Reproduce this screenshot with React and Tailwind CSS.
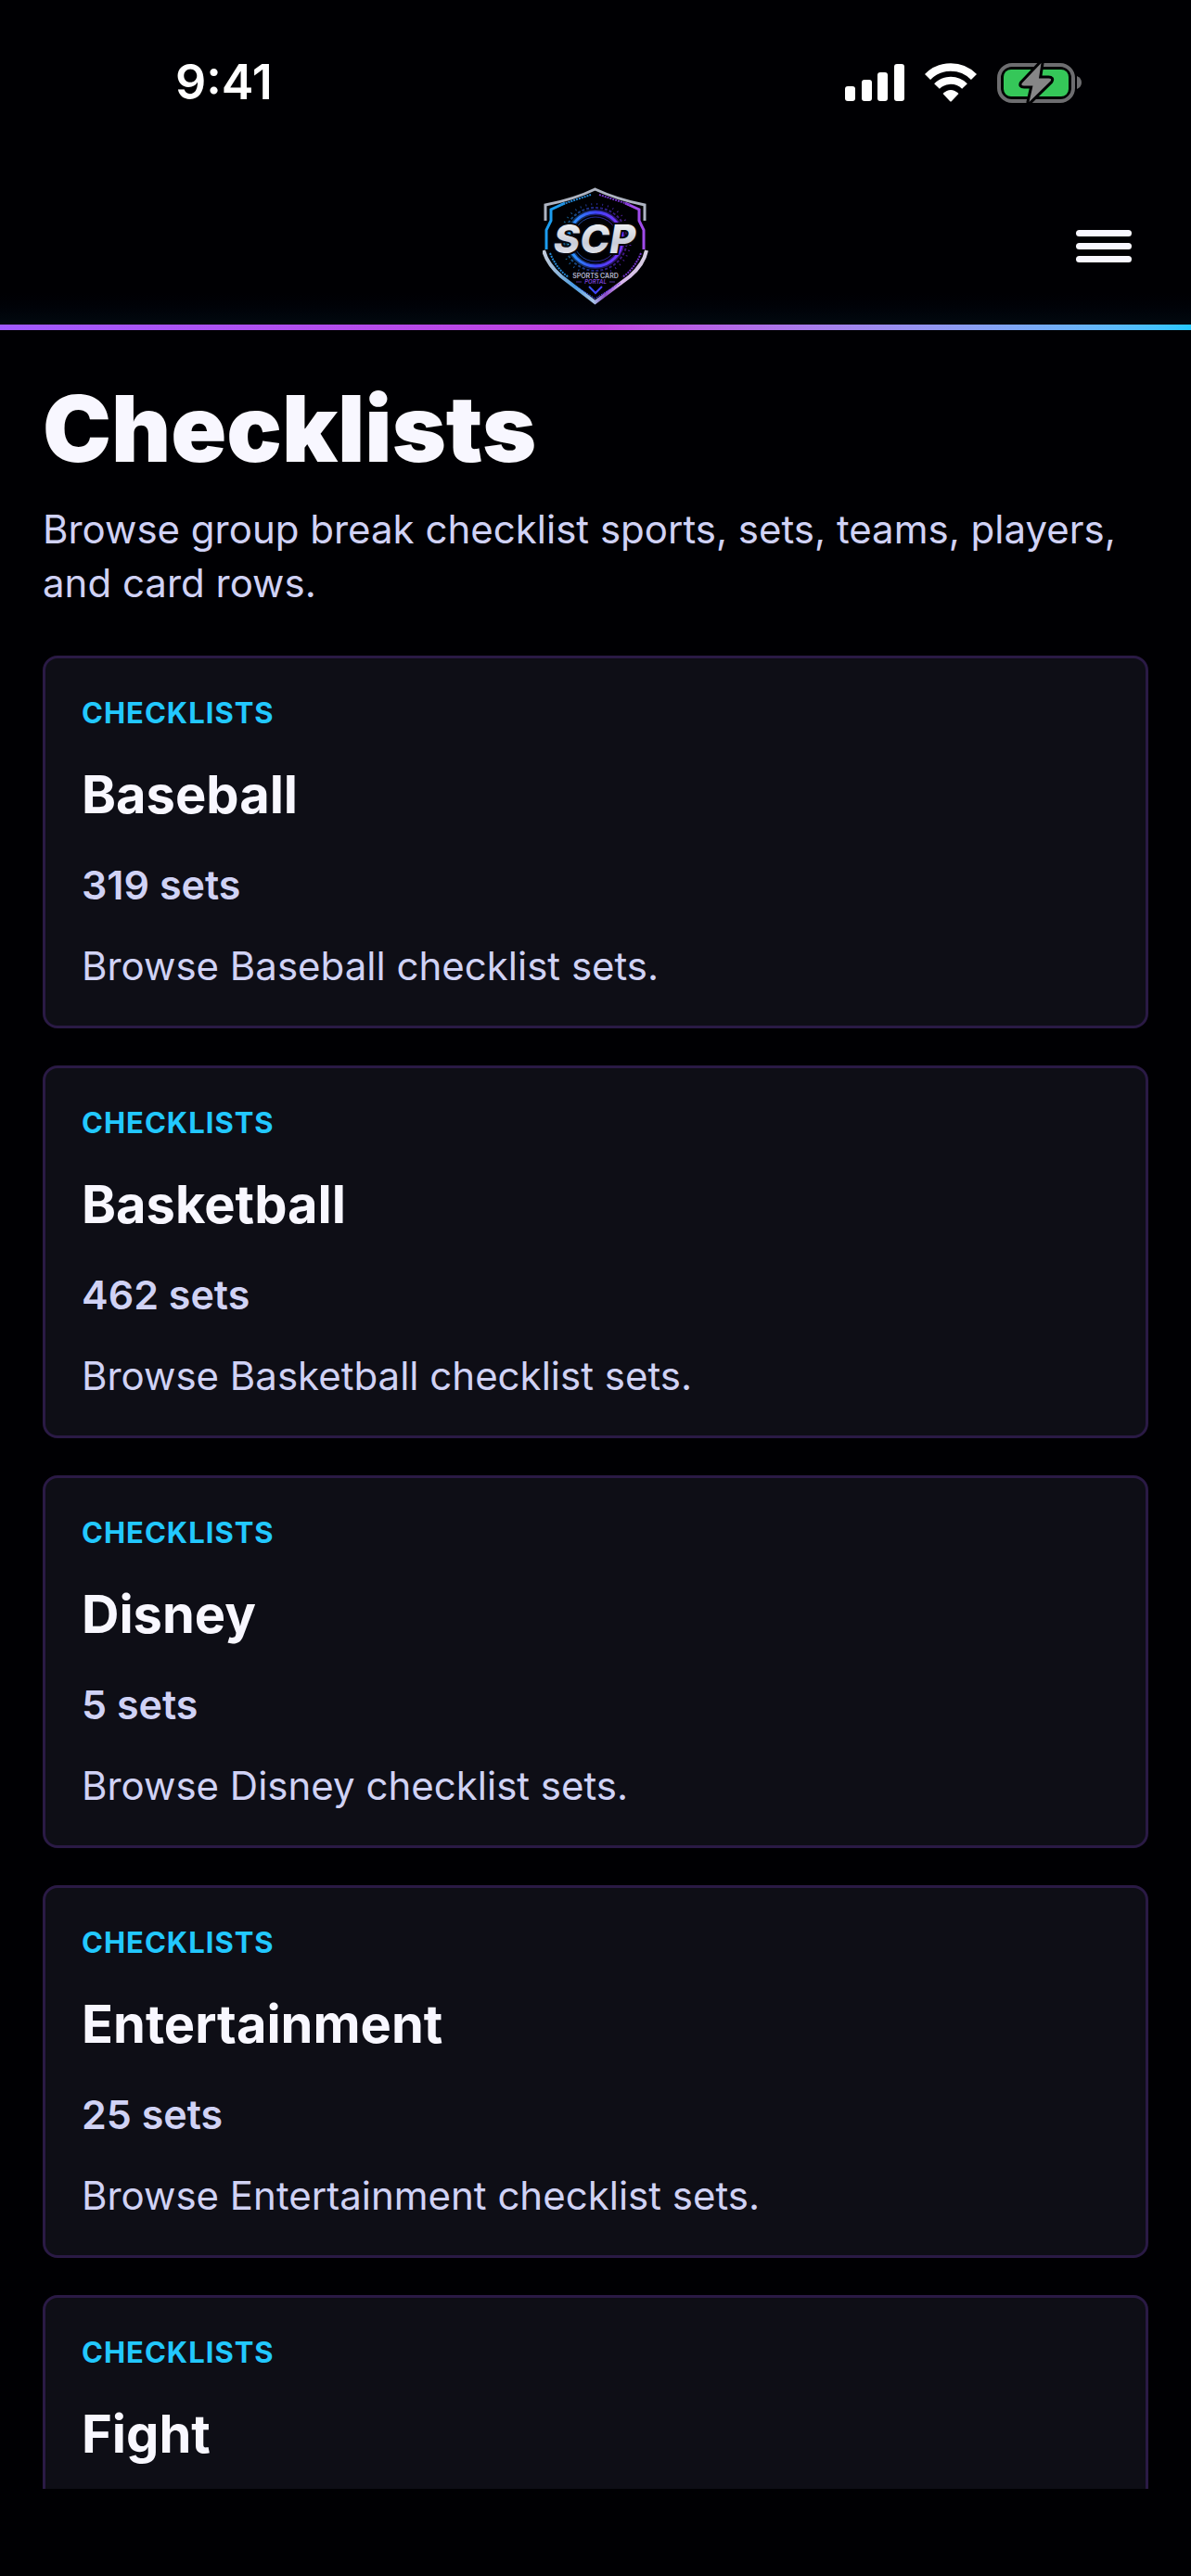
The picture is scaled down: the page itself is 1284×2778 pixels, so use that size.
const sports = [
  { name: "Baseball", sets: 319 },
  { name: "Basketball", sets: 462 },
  { name: "Disney", sets: 5 },
  { name: "Entertainment", sets: 25 },
  { name: "Fight" },
];

function StatusBar() {
  return (
    <div className="flex h-[176px] items-center justify-between pt-[2px] pr-[118px] pl-[189px]">
      <span className="text-[52px] leading-[60px] font-semibold text-white">9:41</span>
      <div className="flex items-center gap-[22px]">
        <svg className="h-[42px] w-[64px]" viewBox="0 0 64 42" fill="#fff" aria-hidden="true">
          <rect x="0" y="25" width="11" height="16" rx="3" />
          <rect x="18" y="18" width="11" height="23" rx="3" />
          <rect x="35" y="10" width="11" height="31" rx="3" />
          <rect x="53" y="1" width="11" height="40" rx="3" />
        </svg>
        <svg className="h-[42px] w-[56px]" viewBox="0 0 56 42" fill="none" aria-hidden="true">
          <path d="M3 15A35 35 0 0 1 53 15" stroke="#fff" strokeWidth="8.500" />
          <path d="M13 25A21 21 0 0 1 43 25" stroke="#fff" strokeWidth="8" />
          <path d="M19.500 33Q28 25 36.500 33L29 41Q28 42 27 41Z" fill="#fff" />
        </svg>
        <svg className="h-[46px] w-[91px]" viewBox="0 0 91 46" fill="none" aria-hidden="true">
          <rect x="2" y="4" width="80" height="39" rx="14" stroke="#6d6d70" strokeWidth="4" />
          <rect x="7" y="9" width="70" height="29" rx="8" fill="#35c759" />
          <path d="M86 16q5 2 5 7t-5 7Z" fill="#6d6d70" />
          <path
            d="M47.500 2L27 23.500q-2 3 2 3h9.500L34.500 44L57.500 21.500q2-3-2-3h-10.500Z"
            fill="#868687"
            stroke="#000003"
            strokeWidth="6"
            strokeLinejoin="round"
            paintOrder="stroke"
          />
        </svg>
      </div>
    </div>
  );
}

function Logo() {
  return (
    <svg className="h-[128px] w-[114px]" viewBox="0 0 114 128" fill="none" role="img" aria-label="SCP Sports Card Portal">
      <defs>
        <linearGradient id="neon" gradientUnits="userSpaceOnUse" x1="22" y1="0" x2="92" y2="0">
          <stop offset="0" stopColor="#22b4ff" />
          <stop offset="0.5" stopColor="#3f45ff" />
          <stop offset="1" stopColor="#8a2cf5" />
        </linearGradient>
        <linearGradient id="steel" x1="0" y1="0" x2="0" y2="1">
          <stop offset="0" stopColor="#ffffff" />
          <stop offset="0.6" stopColor="#c9ccd8" />
          <stop offset="1" stopColor="#f4f5fa" />
        </linearGradient>
        <linearGradient id="rim" x1="0" y1="0" x2="1" y2="0">
          <stop offset="0" stopColor="#c4cbd8" />
          <stop offset="0.3" stopColor="#4f9ee0" />
          <stop offset="0.48" stopColor="#a9c6e8" />
          <stop offset="0.6" stopColor="#8a48c8" />
          <stop offset="0.75" stopColor="#d8b4ee" />
          <stop offset="1" stopColor="#d6cfe0" />
        </linearGradient>
      </defs>
      <path d="M3 37V20Q34 14 56.500 3Q80 14 110 20V37" stroke="#aeb4c2" strokeWidth="3" />
      <path d="M1 69Q5 84 20 97L56.500 125L94 97Q109 84 112 69" stroke="url(#rim)" strokeWidth="4" />
      <path d="M24 18L9 25V37L4 47V68" stroke="#1c9df0" strokeWidth="3" />
      <path d="M89 18L104 25V37L109 47V68" stroke="#a04bea" strokeWidth="3" />
      <path d="M19 20L52 9M8 72Q15 89 28 98" stroke="#2389d8" strokeWidth="2" strokeDasharray="2 1" />
      <path d="M61 9L95 20M106 72Q99 89 86 98" stroke="#7333c8" strokeWidth="2" strokeDasharray="2 1" />
      <path d="M30 104L56.500 121L84 104" stroke="url(#neon)" strokeWidth="1" strokeDasharray="2 1" />
      <circle cx="57" cy="57" r="38" stroke="url(#neon)" strokeWidth="2" strokeDasharray="1 5" opacity="0.6" />
      <circle cx="57" cy="57" r="34" stroke="url(#neon)" strokeWidth="2" strokeDasharray="3 2" opacity="0.5" />
      <circle cx="57" cy="57" r="29" stroke="url(#neon)" strokeWidth="6" opacity="0.4" />
      <circle cx="57" cy="57" r="29" stroke="url(#neon)" strokeWidth="3" />
      <circle cx="57" cy="57" r="24" stroke="url(#neon)" strokeWidth="1" opacity="0.6" />
      <text x="56" y="72" textAnchor="middle" fill="url(#steel)" stroke="#05050c" strokeWidth="4" paintOrder="stroke" className="font-['Inter',sans-serif] text-[43px] font-extrabold italic">
        SCP
      </text>
      <text x="57" y="99" textAnchor="middle" fill="#b4b6cc" className="font-['Inter',sans-serif] text-[7px] font-semibold">
        SPORTS CARD
      </text>
      <text x="57" y="105" textAnchor="middle" fill="#7a42d8" className="font-['Inter',sans-serif] text-[6px] font-semibold italic">
        PORTAL
      </text>
      <path d="M36 103H42M72 103H78" stroke="#4a2c98" strokeWidth="1" />
      <path d="M50 108L57 115L64 108" stroke="url(#neon)" strokeWidth="2" />
    </svg>
  );
}

function Header() {
  return (
    <header>
      <div className="grid h-[174px] grid-cols-3 items-center bg-gradient-to-b from-[#000003] from-80% to-[#020a10] px-[64px] pt-[4px]">
        <a href="#home" className="col-start-2 justify-self-center">
          <Logo />
        </a>
        <button type="button" aria-label="Open menu" className="flex w-[60px] flex-col gap-[7px] justify-self-end">
          <span className="h-[7px] rounded-full bg-[#f8f7ff]" />
          <span className="h-[7px] rounded-full bg-[#f8f7ff]" />
          <span className="h-[7px] rounded-full bg-[#f8f7ff]" />
        </button>
      </div>
      <div className="h-[6px] bg-gradient-to-r from-[#a05aff] via-[#c040e0] to-[#22c8ff]" />
    </header>
  );
}

function SportCard({ name, sets }) {
  return (
    <a
      href={`#${name.toLowerCase()}`}
      className="flex min-h-[402px] flex-col rounded-[16px] border-[3px] border-[#2a1a45] bg-[#0e0e16] px-[39px] pt-[39px]"
    >
      <span className="text-[31px] leading-[40px] font-bold tracking-[1px] text-[#22c8ff] uppercase">Checklists</span>
      <h2 className="mt-[32px] text-[56px] leading-[72px] font-bold text-[#f8f7ff]">{name}</h2>
      {sets !== undefined && (
        <>
          <p className="mt-[32px] text-[43px] leading-[58px] font-semibold text-[#d0d2f5]">{sets} sets</p>
          <p className="mt-[30px] text-[42px] leading-[58px] text-[#d0d2f5]">Browse {name} checklist sets.</p>
        </>
      )}
    </a>
  );
}

export default function App() {
  return (
    <div className="flex h-screen flex-col bg-[#000003] font-['Inter','Liberation_Sans',sans-serif]">
      <StatusBar />
      <Header />
      <main className="min-h-0 flex-1 overflow-hidden px-[46px] pt-[56px]">
        <h1 className="text-[99px] leading-[100px] font-black text-[#f8f7ff]">Checklists</h1>
        <p className="mt-[30px] text-[42px] leading-[58px] text-[#d0d2f5]">
          Browse group break checklist sports, sets, teams, players, and card rows.
        </p>
        <div className="mt-[49px] flex flex-col gap-[40px]">
          {sports.map((sport) => (
            <SportCard key={sport.name} {...sport} />
          ))}
        </div>
      </main>
      {/* home indicator area */}
      <div className="h-[94px] shrink-0" />
    </div>
  );
}
